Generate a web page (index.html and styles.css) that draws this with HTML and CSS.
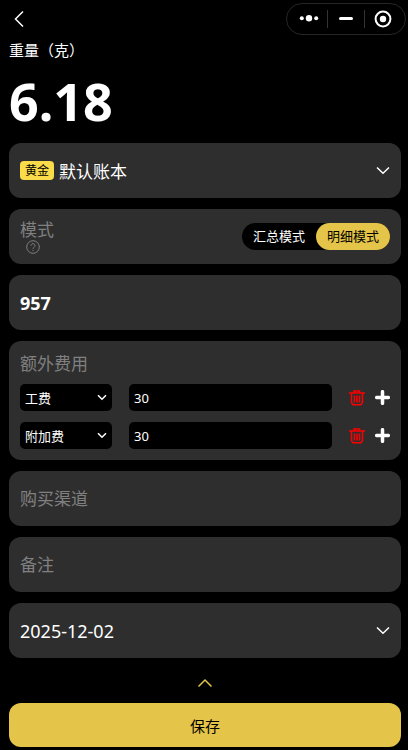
FILE: index.html
```html
<!DOCTYPE html>
<html lang="zh-CN">

<head>
  <meta charset="UTF-8">
  <meta name="viewport" content="width=device-width, initial-scale=1.0">
  <title>记一笔</title>
  <link rel="stylesheet" href="styles.css">
</head>

<body>
  <header class="navbar">
    <button type="button" class="back" aria-label="返回">
      <svg width="10" height="18" viewBox="0 0 10 18"><path d="M9 1.5 1.5 9 9 16.5" /></svg>
    </button>
    <div class="capsule">
      <button type="button" class="capsule-btn" aria-label="更多">
        <svg width="20" height="18" viewBox="0 0 20 18">
          <circle cx="2.8" cy="8.3" r="2" />
          <circle cx="10" cy="8.3" r="3.2" />
          <circle cx="17.2" cy="8.3" r="2" />
        </svg>
      </button>
      <button type="button" class="capsule-btn" aria-label="最小化">
        <svg width="18" height="18" viewBox="0 0 18 18"><rect x="2" y="7" width="14" height="3" rx="1.5" /></svg>
      </button>
      <button type="button" class="capsule-btn" aria-label="关闭">
        <svg width="18" height="18" viewBox="0 0 18 18">
          <circle class="ring" cx="9" cy="9" r="7.4" />
          <circle cx="9" cy="9" r="3.2" />
        </svg>
      </button>
    </div>
  </header>

  <form class="form">
    <label class="weight-label" for="weight">重量（克）</label>
    <input class="weight" type="text" id="weight" value="6.18">

    <div class="list">
      <button type="button" class="card">
        <span class="account"><span class="tag">黄金</span>默认账本</span>
        <svg class="arrow" width="14" height="9" viewBox="0 0 14 9"><path d="M1 1.5 7 7.3 13 1.5" /></svg>
      </button>

      <div class="card">
        <div class="mode-title">
          <span>模式</span>
          <button type="button" class="help" aria-label="帮助">
            <svg width="14" height="14" viewBox="0 0 14 14">
              <circle cx="7" cy="7" r="6.3" />
              <path d="M5 5.7a2 2 0 1 1 3.1 1.6C7.3 7.8 7 8 7 8.8M7 10v1" />
            </svg>
          </button>
        </div>
        <div class="switch">
          <label class="switch-item"><input type="radio" name="mode">汇总模式</label>
          <label class="switch-item"><input type="radio" name="mode" checked>明细模式</label>
        </div>
      </div>

      <input class="card amount" type="text" value="957" aria-label="金额">

      <div class="card fees">
        <div class="fees-title">额外费用</div>
        <div class="fee">
          <div class="fee-type">
            <select aria-label="费用类型">
              <option selected>工费</option>
              <option>附加费</option>
            </select>
            <svg class="arrow fee-arrow" width="10" height="7" viewBox="0 0 10 7"><path d="M1 1.2 5 5.2 9 1.2" /></svg>
          </div>
          <input class="fee-value" type="text" value="30" aria-label="费用金额">
          <div class="fee-actions">
            <button type="button" class="delete" aria-label="删除">
              <svg width="16" height="16" viewBox="0 0 16 16"><path d="M0 3h16M5 3V1h5.5v2M2.5 3v9.5L4 14.8h8l1.5-2.3V3M5.5 5.5v7M8 5.5v7M10.5 5.5v7" /></svg>
            </button>
            <button type="button" class="add" aria-label="添加">
              <svg width="15" height="15" viewBox="0 0 15 15"><path d="M7.5 1.7v11.6M1.7 7.5h11.6" /></svg>
            </button>
          </div>
        </div>
        <div class="fee">
          <div class="fee-type">
            <select aria-label="费用类型">
              <option>工费</option>
              <option selected>附加费</option>
            </select>
            <svg class="arrow fee-arrow" width="10" height="7" viewBox="0 0 10 7"><path d="M1 1.2 5 5.2 9 1.2" /></svg>
          </div>
          <input class="fee-value" type="text" value="30" aria-label="费用金额">
          <div class="fee-actions">
            <button type="button" class="delete" aria-label="删除">
              <svg width="16" height="16" viewBox="0 0 16 16"><path d="M0 3h16M5 3V1h5.5v2M2.5 3v9.5L4 14.8h8l1.5-2.3V3M5.5 5.5v7M8 5.5v7M10.5 5.5v7" /></svg>
            </button>
            <button type="button" class="add" aria-label="添加">
              <svg width="15" height="15" viewBox="0 0 15 15"><path d="M7.5 1.7v11.6M1.7 7.5h11.6" /></svg>
            </button>
          </div>
        </div>
      </div>

      <input class="card" type="text" placeholder="购买渠道" aria-label="购买渠道">
      <input class="card" type="text" placeholder="备注" aria-label="备注">

      <button type="button" class="card date">
        <span>2025-12-02</span>
        <svg class="arrow" width="14" height="9" viewBox="0 0 14 9"><path d="M1 1.5 7 7.3 13 1.5" /></svg>
      </button>
    </div>

    <button type="button" class="collapse" aria-label="收起">
      <svg width="16" height="10" viewBox="0 0 16 10"><path d="M1.5 8.5 8 2l6.5 6.5" /></svg>
    </button>
    <button type="submit" class="save">保存</button>
  </form>
</body>

</html>
```
FILE: styles.css
```css
* {
  padding: 0;
  margin: 0;
  box-sizing: border-box;
}

body {
  font-family: "Noto Sans", "Noto Sans CJK SC", sans-serif;
  background-color: #000;
  color: #fff;
}

button,
input,
select {
  font: inherit;
  color: inherit;
  background: none;
  border: none;
  outline: none;
}

svg {
  display: block;
  fill: none;
  stroke: currentColor;
}

/* top bar */
.navbar {
  display: flex;
  justify-content: space-between;
  align-items: center;
  height: 38px;
  padding: 0 2px 0 9px;
}

.back {
  padding: 4px 5px;
}

.back svg {
  stroke-width: 1.5;
}

.capsule {
  display: flex;
  align-items: center;
  width: 120px;
  height: 32px;
  border: 1px solid #262626;
  border-radius: 16px;
}

.capsule-btn {
  display: flex;
  flex: 1;
  justify-content: center;
}

.capsule-btn:first-child {
  padding-left: 4px;
}

.capsule-btn:last-child {
  padding-right: 4px;
}

.capsule-btn + .capsule-btn {
  border-left: 1px solid #333;
}

.capsule svg {
  fill: #fff;
  stroke: none;
}

.capsule .ring {
  fill: none;
  stroke: #fff;
  stroke-width: 2;
}

/* form */
.form {
  display: flex;
  flex-direction: column;
  padding: 0 7px 3px 9px;
}

.weight-label {
  font-size: 15px;
  line-height: 24px;
}

.weight {
  width: 100%;
  height: 76px;
  margin-bottom: 5px;
  font-size: 52px;
  font-weight: 700;
}

.list {
  display: flex;
  flex-direction: column;
  gap: 11px;
}

.card {
  display: flex;
  justify-content: space-between;
  align-items: center;
  width: 100%;
  min-height: 55px;
  padding: 0 11px;
  background-color: #2e2e2e;
  border-radius: 12px;
  font-size: 17px;
}

.card::placeholder {
  color: #808080;
}

.arrow {
  stroke-width: 1.5;
}

.account {
  display: flex;
  align-items: center;
  gap: 5px;
}

.tag {
  padding: 0 5px;
  background-color: #fadb4a;
  border-radius: 4px;
  color: #000;
  font-size: 12px;
  line-height: 19px;
}

.mode-title {
  color: #808080;
  line-height: 20px;
}

.help {
  display: block;
  margin-left: 6px;
}

.switch {
  display: flex;
  background-color: #000;
  border-radius: 14px;
}

.switch-item {
  padding: 0 11px;
  border-radius: 14px;
  font-size: 13px;
  line-height: 27px;
}

.switch-item input {
  position: absolute;
  opacity: 0;
}

.switch-item:has(input:checked) {
  background-color: #e4c449;
  color: #000;
}

.amount {
  font-size: 18px;
  font-weight: 700;
}

.date {
  font-size: 18px;
}

/* extra fees */
.fees {
  flex-direction: column;
  align-items: stretch;
  padding: 11px;
}

.fees-title {
  color: #808080;
  line-height: 24px;
}

.fee {
  display: grid;
  grid-template-columns: 92px 1fr auto;
  align-items: center;
  gap: 17px;
  margin-top: 8px;
  font-size: 13px;
}

.fee + .fee {
  margin-top: 11px;
}

.fee-type {
  position: relative;
}

.fee-type select,
.fee-value {
  display: block;
  width: 100%;
  height: 27px;
  padding: 0 5px;
  background-color: #000;
  border-radius: 5px;
}

.fee-type select {
  appearance: none;
}

.fee-arrow {
  position: absolute;
  top: 10px;
  right: 5px;
  pointer-events: none;
}

.fee-actions {
  display: flex;
  align-items: center;
  gap: 10px;
}

.delete {
  color: #f00;
}

.delete svg {
  stroke-width: 1.5;
}

.add svg {
  stroke-width: 3.5;
  stroke-linecap: round;
}

/* bottom */
.collapse {
  display: flex;
  justify-content: center;
  align-items: center;
  height: 45px;
  padding-top: 5px;
  color: #e4c449;
}

.collapse svg {
  stroke-width: 1.5;
}

.save {
  height: 44px;
  background-color: #e4c449;
  border-radius: 12px;
  color: #000;
  font-size: 15px;
}
```
